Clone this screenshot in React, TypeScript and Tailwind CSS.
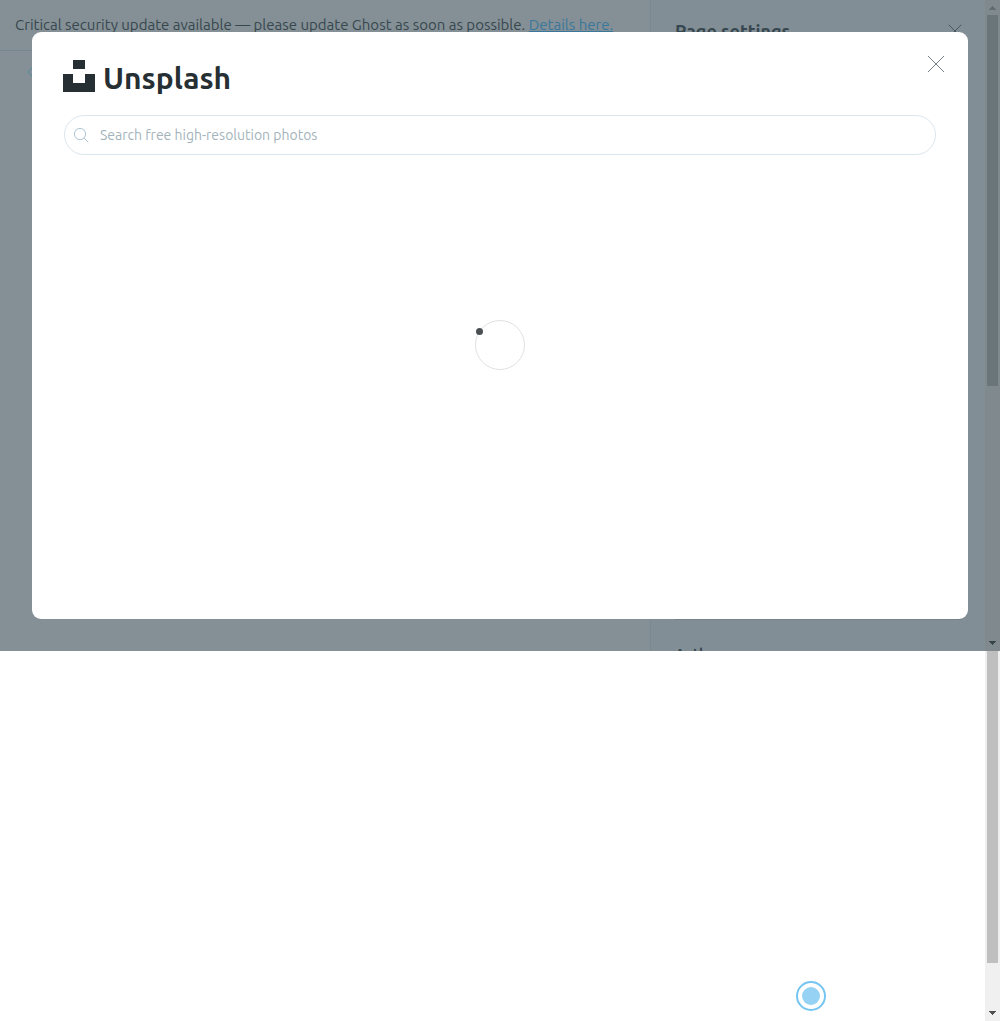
import React from "react";

function Arrow({ up = false, className = "" }: { up?: boolean; className?: string }) {
  return (
    <svg className={`h-4 w-[15px] shrink-0 ${className}`} viewBox="0 0 15 16" fill="currentColor" aria-hidden="true" shapeRendering="crispEdges">
      {up ? <path d="M7.5 6l4 4h-8z" /> : <path d="M3.5 6h8l-4 4z" />}
    </svg>
  );
}

function Cross({ className = "" }: { className?: string }) {
  return (
    <svg className={className} viewBox="0 0 18 18" fill="none" stroke="currentColor" aria-hidden="true">
      <path d="M1 1l16 16M17 1L1 17" />
    </svg>
  );
}

function Editor() {
  return (
    <div className="col-start-1 row-start-1 flex overflow-hidden bg-[#849095] text-[#37474f]">
      <main className="min-w-0 flex-1">
        <p className="h-[51px] border-b border-[#758790] px-[15px] pt-[13px] text-[15px] leading-6 whitespace-nowrap">
          Critical security update available — please update Ghost as soon as possible.{" "}
          <a href="#details" className="text-[#3a779c] underline">Details here.</a>
        </p>
        <a href="#pages" aria-label="Back to pages" className="mt-4 ml-[26px] block w-3 text-[#5689a3]">
          <svg className="h-3 w-3" viewBox="0 0 12 12" fill="none" stroke="currentColor" aria-hidden="true">
            <path d="M6 1L2 5l4 4" />
          </svg>
        </a>
      </main>
      <aside className="flex w-[335px] shrink-0 flex-col justify-between border-l border-[#7b8990] bg-[#818e95] pl-6">
        <div className="flex items-start justify-between pt-[19px] pr-[23px]">
          <h2 className="text-lg leading-6 font-bold">Page settings</h2>
          <button type="button" aria-label="Close settings" className="mt-[5px]">
            <Cross className="h-[14px] w-[14px]" />
          </button>
        </div>
        <div className="h-8 pr-6">
          <div className="border-t border-[#75828a] pt-6 text-sm leading-5 font-bold">Authors</div>
        </div>
      </aside>
      <div className="flex w-[15px] shrink-0 flex-col items-center bg-[#7f898e]">
        <Arrow up className="-mb-px text-[#626c71]" />
        <div className="h-[371px] w-[11px] bg-[#6a757a]" />
        <Arrow className="mt-auto text-[#37454d]" />
      </div>
    </div>
  );
}

function UnsplashDialog() {
  return (
    <section role="dialog" aria-label="Unsplash" className="z-10 col-start-1 row-start-1 m-8 rounded-[9px] bg-white px-8">
      <header className="flex h-[83px] items-start justify-between">
        <div className="-ml-px flex items-end gap-2 pt-7 text-[#262f33]">
          <svg className="h-8 w-8" viewBox="0 0 32 32" fill="currentColor" aria-hidden="true">
            <path d="M10 9V0h12v9H10zm12 5h10v18H0V14h10v9h12z" />
          </svg>
          <h1 className="text-[30px] leading-7 font-bold">Unsplash</h1>
        </div>
        <button type="button" aria-label="Close" className="-mr-[9px] pt-[23px] text-[#738086]">
          <Cross className="h-[18px] w-[18px]" />
        </button>
      </header>
      <label className="flex h-10 items-center gap-[11px] rounded-full border border-[#dae6ed] px-2">
        <svg className="h-4 w-4 shrink-0 text-[#adc5d3]" viewBox="0 0 16 16" fill="none" stroke="currentColor" aria-hidden="true">
          <circle cx="7" cy="7" r="5.6" />
          <path d="M11 11l4.3 4.3" />
        </svg>
        <input
          type="search"
          aria-label="Search photos"
          placeholder="Search free high-resolution photos"
          className="min-w-0 flex-1 bg-transparent text-sm outline-none placeholder:text-[#a3b3bb]"
        />
      </label>
      <div className="flex justify-center pt-[165px] pb-[249px]">
        <svg role="img" aria-label="Loading" className="h-[50px] w-[50px] overflow-visible" viewBox="0 0 50 50">
          <circle cx="25" cy="25" r="24.5" fill="none" stroke="#e0e1e3" />
          <circle cx="4.5" cy="11.5" r="3.5" fill="#4a4f53" />
        </svg>
      </div>
    </section>
  );
}

export default function App() {
  return (
    <div className="flex min-h-screen flex-col bg-white font-['Ubuntu','Noto_Sans',sans-serif]">
      <div className="grid grid-cols-1">
        <Editor />
        <UnsplashDialog />
      </div>
      <div className="flex flex-1">
        <div className="flex flex-1 items-end justify-end pr-[159px] pb-[10px]">
          <button type="button" aria-label="Open help" className="flex h-[30px] w-[30px] items-center justify-center rounded-full border-2 border-[#74c5f1]">
            <span className="h-[18px] w-[18px] rounded-full bg-[#95d2f4]" />
          </button>
        </div>
        <div className="flex w-[15px] flex-col items-center bg-[#f0f0f0]">
          <div className="h-[312px] w-[11px] bg-[#bfbfbf]" />
          <Arrow className="mt-auto text-[#505050]" />
        </div>
      </div>
    </div>
  );
}
